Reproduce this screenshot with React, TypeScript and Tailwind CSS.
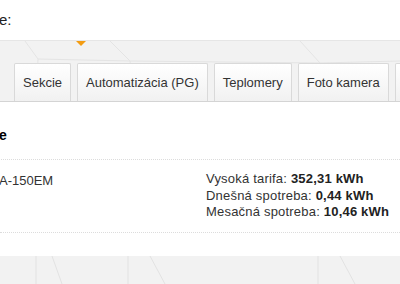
import React from "react";

const tabs = ["Sekcie", "Automatizácia (PG)", "Teplomery", "Foto kamera"];

const stats = [
  { label: "Vysoká tarifa:", value: "352,31 kWh" },
  { label: "Dnešná spotreba:", value: "0,44 kWh" },
  { label: "Mesačná spotreba:", value: "10,46 kWh" },
];

// faint diagonal pattern behind the tabs
const Pattern = () => (
  <svg className="absolute inset-0 h-full w-full" viewBox="0 0 400 60" preserveAspectRatio="none">
    <g stroke="#e4e4e4" strokeWidth="1" fill="none">
      <path d="M25 0 L38 18 L36 60" />
      <path d="M110 0 L130 20 L133 60" />
      <path d="M300 0 L320 22 L318 60" />
      <path d="M38 18 L130 20 L320 22 L400 20" />
    </g>
  </svg>
);

export default function App() {
  return (
    <div className="h-[284px] w-[400px] overflow-hidden bg-white text-[#333] font-['Liberation_Sans',Arial,sans-serif]">
      <div className="flex h-[40px] items-center text-[15px] text-[#222] -ml-[1px]">e:</div>

      <div className="relative h-[61px] bg-[#f2f2f2] border-t border-[#e6e6e6]">
        <Pattern />
        <div className="absolute left-[76px] top-0 h-0 w-0 border-x-[5px] border-t-[5px] border-x-transparent border-t-[#f39c12]" />
        <div className="relative flex gap-[6px] pl-[14px] pt-[22px]">
          {tabs.map((t) => (
            <div
              key={t}
              className="flex h-[38px] items-center whitespace-nowrap rounded-t-[2px] border border-b-0 border-[#d9d9d9] bg-gradient-to-b from-white to-[#f1f1f1] px-[8px] text-[13px] text-[#333]"
            >
              {t}
            </div>
          ))}
          <div className="h-[38px] w-[20px] shrink-0 rounded-t-[2px] border border-b-0 border-[#d9d9d9] bg-gradient-to-b from-white to-[#f1f1f1]" />
        </div>
      </div>

      <div className="border-t border-[#d4d4d4] bg-white shadow-[0_1px_2px_rgba(0,0,0,0.15)]">
        <div className="flex h-[58px] items-center border-b border-dotted border-[#dcdcdc] pt-[10px] text-[14px] font-bold text-black -ml-[1px]">
          e
        </div>
        <div className="flex h-[72px] pt-[11px] text-[13px] text-[#333]">
          <div className="w-[207px] -ml-[1px]">A-150EM</div>
          <div className="flex flex-col leading-[16.5px] tracking-[0.2px]">
            {stats.map((s) => (
              <div key={s.label} className="whitespace-nowrap">
                {s.label} <b className="text-[#222]">{s.value}</b>
              </div>
            ))}
          </div>
        </div>
        <div className="h-[24px] border-t border-dotted border-[#dcdcdc]" />
      </div>

      <div className="relative h-[28px] bg-[#f2f2f2]">
        <svg className="absolute inset-0 h-full w-full" viewBox="0 0 400 28" preserveAspectRatio="none">
          <g stroke="#e2e2e2" fill="none">
            <path d="M36 0 L36 28" />
            <path d="M52 0 L62 28" />
            <path d="M128 0 L128 28" />
            <path d="M150 0 L165 28" />
            <path d="M318 0 L318 28" />
            <path d="M340 0 L355 28" />
          </g>
        </svg>
      </div>
    </div>
  );
}
